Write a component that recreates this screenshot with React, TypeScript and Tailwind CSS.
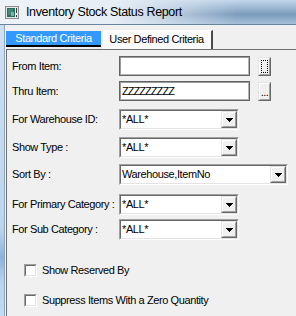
import React from "react";

const txt = "text-[11px] leading-[13px] tracking-[-0.4px] text-black";

function Sunken({ className = "", inner = "", children }: { className?: string; inner?: string; children?: React.ReactNode }) {
  return (
    <div className={`border border-t-[#a0a0a0] border-l-[#a0a0a0] border-r-white border-b-white ${className}`}>
      <div className={`flex h-full w-full items-center border border-t-[#696969] border-l-[#696969] border-r-[#e3e3e3] border-b-[#e3e3e3] bg-white ${inner}`}>
        {children}
      </div>
    </div>
  );
}

function Raised({ className = "", inner = "", children }: { className?: string; inner?: string; children?: React.ReactNode }) {
  return (
    <div className={`border border-t-[#e3e3e3] border-l-[#e3e3e3] border-r-[#696969] border-b-[#696969] ${className}`}>
      <div className={`flex h-full w-full border border-t-white border-l-white border-r-[#a0a0a0] border-b-[#a0a0a0] bg-[#f0f0f0] ${inner}`}>
        {children}
      </div>
    </div>
  );
}

function Arrow() {
  return (
    <svg width="7" height="4" viewBox="0 0 7 4" shapeRendering="crispEdges">
      <rect x="0" y="0" width="7" height="1" fill="#000" />
      <rect x="1" y="1" width="5" height="1" fill="#000" />
      <rect x="2" y="2" width="3" height="1" fill="#000" />
      <rect x="3" y="3" width="1" height="1" fill="#000" />
    </svg>
  );
}

function Combo({ className, text }: { className: string; text: string }) {
  return (
    <Sunken className={`h-[21px] ${className}`}>
      <span className={`flex-1 pl-[1px] ${txt}`}>{text}</span>
      <Raised className="h-full w-[16px]" inner="items-center justify-center">
        <Arrow />
      </Raised>
    </Sunken>
  );
}

function TextBox({ children }: { children?: React.ReactNode }) {
  return (
    <div className="h-[20px] w-[131px] border border-[#646464]">
      <div className="flex h-full w-full items-center border border-t-[#9a9a9a] border-l-[#9a9a9a] border-r-[#b4b4b4] border-b-[#b4b4b4] bg-white pl-[1px]">
        {children}
      </div>
    </div>
  );
}

function Row({ label, mt, h, children }: { label: string; mt: string; h: string; children: React.ReactNode }) {
  return (
    <div className={`flex items-center ${mt} ${h}`}>
      <div className={`w-[107px] shrink-0 ${txt}`}>{label}</div>
      {children}
    </div>
  );
}

function Check({ label, mt }: { label: string; mt: string }) {
  return (
    <div className={`flex h-[13px] items-center ${mt}`}>
      <Sunken className="ml-[12px] h-[13px] w-[13px]" />
      <span className={`ml-[5px] ${txt}`}>{label}</span>
    </div>
  );
}

export default function App() {
  return (
    <div className="flex h-[316px] w-[296px] flex-col overflow-hidden bg-[#f0f0f0] font-['Liberation_Sans',Arial,sans-serif]">
      <div className="h-[25px] shrink-0 border-b border-[#6a84a0] bg-[linear-gradient(to_bottom,#c2d6ea,#93b0cd_40%,#7d9cbc_60%,#a4bfd9)]">
        <div className="flex h-full items-center pl-[5px] bg-[linear-gradient(to_right,#eef3f8_0%,#e6edf5_38%,rgba(226,234,243,0.6)_58%,rgba(226,234,243,0)_80%)]">
          <svg width="14" height="13" viewBox="0 0 14 13" shapeRendering="crispEdges">
            <rect x="0" y="0" width="14" height="13" fill="#8c8c8c" />
            <rect x="1" y="1" width="12" height="11" fill="#e8e8e8" />
            <rect x="2" y="2" width="8" height="9" fill="#2d6b5f" />
            <rect x="3" y="3" width="5" height="6" fill="#3e8a7a" />
            <rect x="6" y="6" width="3" height="4" fill="#7fb0a8" />
            <rect x="11" y="2" width="1" height="5" fill="#3a3a3a" />
            <rect x="11" y="9" width="1" height="2" fill="#3a3a3a" />
          </svg>
          <span className="ml-[7px] text-[12.5px] leading-[15px] tracking-[-0.35px] text-black">Inventory Stock Status Report</span>
        </div>
      </div>
      <div className="flex flex-1">
        <div className="w-[4px] bg-[linear-gradient(to_bottom,#cfe0f2,#bcd5ee_70%,#8eb2da_80%,#b9d3ef_88%,#c3dbf3)]" />
        <div className="w-[1px] bg-[#8fa5bb]" />
        <div className="w-[1px] bg-[#f4f4f4]" />
        <div className="flex flex-1 flex-col">
          <div className="flex h-[24px] shrink-0 items-start pt-[5px]">
            <div className="mt-[1px] flex h-[16px] w-[95px] justify-center border-b-2 border-black bg-[#3399ff] pt-[1px] text-[11px] leading-[13px] tracking-[-0.4px] text-white">
              Standard Criteria
            </div>
            <div className={`ml-[2px] flex h-[19px] w-[110px] justify-center border-t border-l border-t-white border-l-white border-r-2 border-r-[#4a4a4a] bg-[#fbfbfb] pt-[2px] pr-[2px] ${txt}`}>
              User Defined Criteria
            </div>
          </div>
          <div className="flex flex-1 flex-col border-t border-l border-[#707070] pl-[5px] pt-[6px]">
            <Row label="From Item:" mt="" h="h-[20px]">
              <TextBox />
              <Raised className="ml-[8px] h-[19px] w-[13px] self-end" inner="p-[1px]">
                <div className="h-full w-full border border-dotted border-black" />
              </Raised>
            </Row>
            <Row label="Thru Item:" mt="mt-[5px]" h="h-[20px]">
              <TextBox>
                <span className="text-[11px] leading-[13px] tracking-[-0.95px] text-black">ZZZZZZZZZ</span>
              </TextBox>
              <Raised className="ml-[8px] h-[19px] w-[13px] self-end" inner="items-end justify-center pb-[1px]">
                <span className="text-[11px] leading-[11px] tracking-[-0.5px] text-black">...</span>
              </Raised>
            </Row>
            <Row label="For Warehouse ID:" mt="mt-[8px]" h="h-[21px]">
              <Combo className="w-[120px]" text="*ALL*" />
            </Row>
            <Row label="Show Type :" mt="mt-[7px]" h="h-[21px]">
              <Combo className="w-[120px]" text="*ALL*" />
            </Row>
            <Row label="Sort By :" mt="mt-[6px]" h="h-[21px]">
              <Combo className="w-[169px]" text="Warehouse,ItemNo" />
            </Row>
            <Row label="For Primary Category :" mt="mt-[9px]" h="h-[21px]">
              <Combo className="w-[120px]" text="*ALL*" />
            </Row>
            <Row label="For Sub Category :" mt="mt-[4px]" h="h-[21px]">
              <Combo className="w-[120px]" text="*ALL*" />
            </Row>
            <Check label="Show Reserved By" mt="mt-[24px]" />
            <Check label="Suppress Items With a Zero Quantity" mt="mt-[17px]" />
          </div>
        </div>
      </div>
    </div>
  );
}
